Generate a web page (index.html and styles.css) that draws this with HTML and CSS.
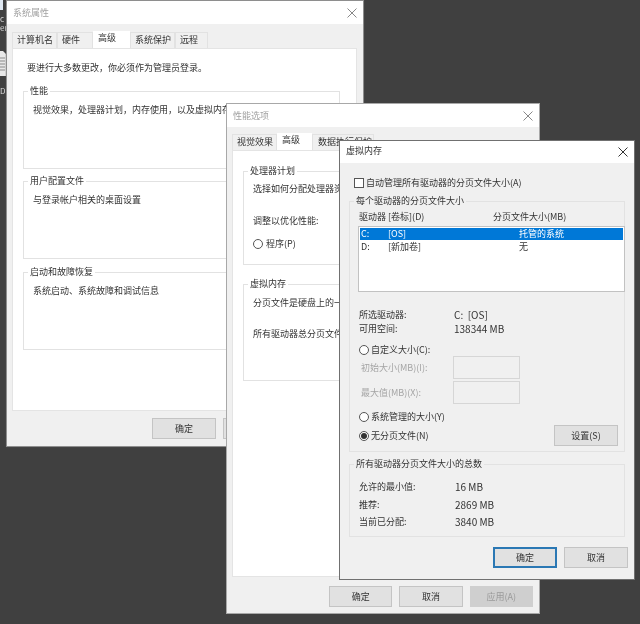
FILE: index.html
```html
<!DOCTYPE html>
<html lang="zh-CN">
<head>
<meta charset="utf-8">
<title>虚拟内存</title>
<link rel="stylesheet" href="styles.css">
</head>
<body>
<main class="desktop">
  <div class="desk-icons">
    <span class="desk-chip"></span>
    <span class="desk-letter">c</span>
    <span class="desk-letter">en</span>
    <svg class="desk-doc" width="9" height="28" viewBox="0 0 9 28"><path d="M0 1h6l3 3v22H0z" fill="#e8e8e8"/><path d="M0 8h8M0 11h8M0 14h8M0 17h8M0 20h8" stroke="#8a8a8a"/></svg>
    <span class="desk-letter">D</span>
  </div>

  <section class="win win-sys">
    <header class="titlebar"><span class="title dim">系统属性</span><svg class="close dim-x" width="10" height="10" viewBox="0 0 10 10"><path d="M.5.5l9 9M9.500.5l-9 9"/></svg></header>
    <div class="body">
      <div class="tabs">
        <span class="tab t-comp">计算机名</span><span class="tab t-hw">硬件</span><span class="tab active t-adv">高级</span><span class="tab t-prot">系统保护</span><span class="tab t-rem">远程</span>
      </div>
      <div class="panel panel-sys">
        <p class="notice">要进行大多数更改，你必须作为管理员登录。</p>
        <fieldset class="group g-sys"><legend>性能</legend><p>视觉效果，处理器计划，内存使用，以及虚拟内存</p></fieldset>
        <fieldset class="group g-sys"><legend>用户配置文件</legend><p>与登录帐户相关的桌面设置</p></fieldset>
        <fieldset class="group g-sys"><legend>启动和故障恢复</legend><p>系统启动、系统故障和调试信息</p></fieldset>
      </div>
      <div class="actions actions-sys"><button class="btn">确定</button><button class="btn">取消</button></div>
    </div>
  </section>

  <section class="win win-perf">
    <header class="titlebar"><span class="title dim">性能选项</span><svg class="close dim-x" width="10" height="10" viewBox="0 0 10 10"><path d="M.5.5l9 9M9.500.5l-9 9"/></svg></header>
    <div class="body body-perf">
      <div class="tabs">
        <span class="tab t-vis">视觉效果</span><span class="tab active t-adv2">高级</span><span class="tab t-dep">数据执行保护</span>
      </div>
      <div class="panel panel-perf">
        <fieldset class="group g-cpu"><legend>处理器计划</legend>
          <p>选择如何分配处理器资源。</p>
          <p class="tune">调整以优化性能:</p>
          <label class="opt prog"><span class="radio"></span>程序(P)</label>
        </fieldset>
        <fieldset class="group g-vm"><legend>虚拟内存</legend>
          <p>分页文件是硬盘上的一块区域</p>
          <p class="total">所有驱动器总分页文件大小:</p>
        </fieldset>
      </div>
      <div class="actions actions-perf"><button class="btn">确定</button><button class="btn">取消</button><button class="btn off">应用(A)</button></div>
    </div>
  </section>

  <section class="win win-vm">
    <header class="titlebar"><span class="title">虚拟内存</span><svg class="close" width="10" height="10" viewBox="0 0 10 10"><path d="M.5.5l9 9M9.500.5l-9 9"/></svg></header>
    <div class="body body-vm">
      <label class="auto"><span class="check"></span>自动管理所有驱动器的分页文件大小(A)</label>
      <fieldset class="group g-drives"><legend>每个驱动器的分页文件大小</legend>
        <div class="cols"><span>驱动器 [卷标](D)</span><span>分页文件大小(MB)</span></div>
        <div class="listbox">
          <div class="row sel"><span>C:</span><span>[OS]</span><span>托管的系统</span></div>
          <div class="row"><span>D:</span><span>[新加卷]</span><span>无</span></div>
        </div>
        <dl class="info info-drive">
          <dt>所选驱动器:</dt><dd>C:&nbsp; [OS]</dd>
          <dt>可用空间:</dt><dd>138344 MB</dd>
        </dl>
        <label class="opt custom"><span class="radio"></span>自定义大小(C):</label>
        <div class="size-row"><span class="grey">初始大小(MB)(I):</span><span class="input"></span></div>
        <div class="size-row"><span class="grey">最大值(MB)(X):</span><span class="input"></span></div>
        <label class="opt managed"><span class="radio"></span>系统管理的大小(Y)</label>
        <div class="last-row">
          <label class="opt"><span class="radio on"></span>无分页文件(N)</label>
          <button class="btn">设置(S)</button>
        </div>
      </fieldset>
      <fieldset class="group g-total"><legend>所有驱动器分页文件大小的总数</legend>
        <dl class="info info-total">
          <dt>允许的最小值:</dt><dd>16 MB</dd>
          <dt>推荐:</dt><dd>2869 MB</dd>
          <dt>当前已分配:</dt><dd>3840 MB</dd>
        </dl>
      </fieldset>
      <div class="actions actions-vm"><button class="btn default">确定</button><button class="btn">取消</button></div>
    </div>
  </section>
</main>
</body>
</html>
```

FILE: styles.css
```css
* { box-sizing: border-box; }
html, body { margin: 0; padding: 0; }
body {
  background: #404040;
  font-family: "Noto Sans CJK SC", "Noto Sans", sans-serif;
  font-size: 9px;
  line-height: 12px;
  color: #333;
}
p { margin: 0; }
.desktop {
  position: relative;
  width: 640px;
  height: 624px;
  overflow: hidden;
  background: #404040;
  filter: blur(0.4px);
}
.desk-icons {
  position: absolute;
  left: 0;
  top: 0;
  width: 6px;
  overflow: hidden;
  display: flex;
  flex-direction: column;
  color: #ddd;
}
.desk-chip { height: 10px; width: 3px; background: #dfe8f2; margin-bottom: 4px; }
.desk-letter { height: 9px; line-height: 9px; font-size: 8px; }
.desk-doc { margin: 18px 0 8px -3px; flex: none; }

.win {
  position: absolute;
  background: #f0f0f0;
  border: 1px solid #8e8e8e;
  display: flex;
  flex-direction: column;
}
.win-sys { left: 6px; top: 0; width: 358px; height: 447px; box-shadow: 0 0 1px #555; }
.win-perf { left: 226px; top: 103px; width: 314px; height: 511px; border-color: #a8a8a8; }
.win-vm { left: 339px; top: 140px; width: 296px; height: 440px; border-color: #707070; }

.titlebar {
  flex: none;
  height: 23px;
  background: #fff;
  display: flex;
  align-items: center;
  justify-content: space-between;
  padding: 0 6px;
}
.win-vm .titlebar { height: 22px; }
.win-vm .title { margin-top: -2px; }
.title { font-size: 9px; color: #333; }
.title.dim { color: #a2a2a2; }
.close { stroke: #333; stroke-width: 1; fill: none; }
.close.dim-x { stroke: #888; }

.body { flex: 1; display: flex; flex-direction: column; padding: 7px 6px 0 5px; min-height: 0; }
.body-perf { padding-top: 6px; }
.tabs { display: flex; align-items: flex-end; height: 17px; flex: none; }
.tab {
  height: 16px;
  line-height: 14px;
  padding-left: 4px;
  background: #f0f0f0;
  border: 1px solid #e2e2e2;
  border-bottom: 0;
  white-space: nowrap;
}
.tab.active { height: 17px; line-height: 12px; background: #fff; border-color: #fff; }
.t-comp { width: 45px; }
.t-hw { width: 36px; }
.t-adv { width: 37px; }
.t-prot { width: 45px; }
.t-rem { width: 33px; }
.t-vis { width: 45px; }
.t-adv2 { width: 35px; }
.t-dep { width: 62px; padding-left: 5px; }

.panel { background: #fff; border: 1px solid #e4e4e4; flex: none; }
.panel-sys { height: 363px; padding: 13px 16px 0 10px; }
.panel-perf { height: 427px; padding: 14px 7px 0 10px; }
.notice { margin: 0 0 11px 4px; }

.group {
  margin: 0;
  padding: 7px 0 0 9px;
  border: 1px solid #e2e2e2;
  min-width: 0;
}
.group legend { padding: 0 2px; margin-left: -5px; line-height: 12px; }
.g-sys { height: 84px; margin-bottom: 7px; }
.notice + .g-sys { margin-bottom: 6px; }
.g-cpu { height: 100px; padding-top: 6px; }
.g-vm { height: 103px; margin-top: 13px; }
.tune { margin-top: 20px; }
.prog { margin-top: 11px; }
.total { margin-top: 19px; }

.opt { display: flex; align-items: center; gap: 3px; height: 12px; }
.radio {
  width: 10px;
  height: 10px;
  border: 1px solid #555;
  border-radius: 50%;
  background: #fff;
  flex: none;
  display: flex;
  align-items: center;
  justify-content: center;
}
.radio.on::after { content: ""; width: 6px; height: 6px; border-radius: 50%; background: #333; }
.check { width: 10px; height: 10px; border: 1px solid #555; background: #fff; flex: none; }

.actions { display: flex; gap: 7px; flex: none; }
.actions-sys { padding: 7px 0 0 140px; }
.actions-perf { padding: 9px 0 0 97px; }
.btn {
  width: 64px;
  height: 21px;
  padding: 0;
  font: inherit;
  color: #333;
  background: #e1e1e1;
  border: 1px solid #c4c4c4;
}
.btn.off { background: #cfcfcf; color: #9a9a9a; border-color: #cfcfcf; }
.btn.default { border: 2px solid #2b78b4; }

.body-vm { padding: 0; }
.auto { display: flex; align-items: center; gap: 2px; height: 12px; margin: 14px 0 0 14px; }
.g-drives, .g-total { margin-left: 9px; width: 276px; background: #f0f0f0; }
.g-drives { margin-top: 6px; height: 257px; padding-top: 4px; }
.cols { display: flex; }
.cols span:first-child { width: 134px; }
.listbox {
  margin: 3px 0 0 -1px;
  width: 267px;
  height: 66px;
  background: #fff;
  border: 1px solid #c2c2c2;
  padding: 1px;
}
.row { display: flex; height: 12px; }
.row:last-child { margin-top: 1px; }
.row span { padding-left: 1px; }
.row span:nth-child(1) { width: 27px; }
.row span:nth-child(2) { width: 131px; }
.row.sel { background: #0078d7; color: #fff; }

.info { display: grid; margin: 0; }
.info dt, .info dd { margin: 0; }
.info dd { font-size: 10px; }
.info-drive { grid-template-columns: 95px 1fr; row-gap: 2px; margin-top: 17px; }
.info-total { grid-template-columns: 96px 1fr; row-gap: 5.5px; margin-top: 9px; }
.custom { margin-top: 9px; gap: 2px; }
.managed { margin-top: 7px; gap: 2px; }
.last-row .opt { gap: 2px; }
.size-row { display: flex; align-items: center; margin-top: 2px; height: 23px; }
.custom + .size-row { margin-top: 0; }
.grey { color: #a5a5a5; width: 94px; padding-left: 2px; }
.input { width: 67px; height: 23px; border: 1px solid #d6d6d6; background: #f0f0f0; }
.last-row { display: flex; align-items: flex-start; justify-content: space-between; margin-top: 7px; padding-right: 6px; }
.last-row .btn { margin-top: -5px; }
.g-total { margin-top: 6px; height: 79px; padding-top: 2px; }
.actions-vm { padding: 10px 0 0 153px; }
```
